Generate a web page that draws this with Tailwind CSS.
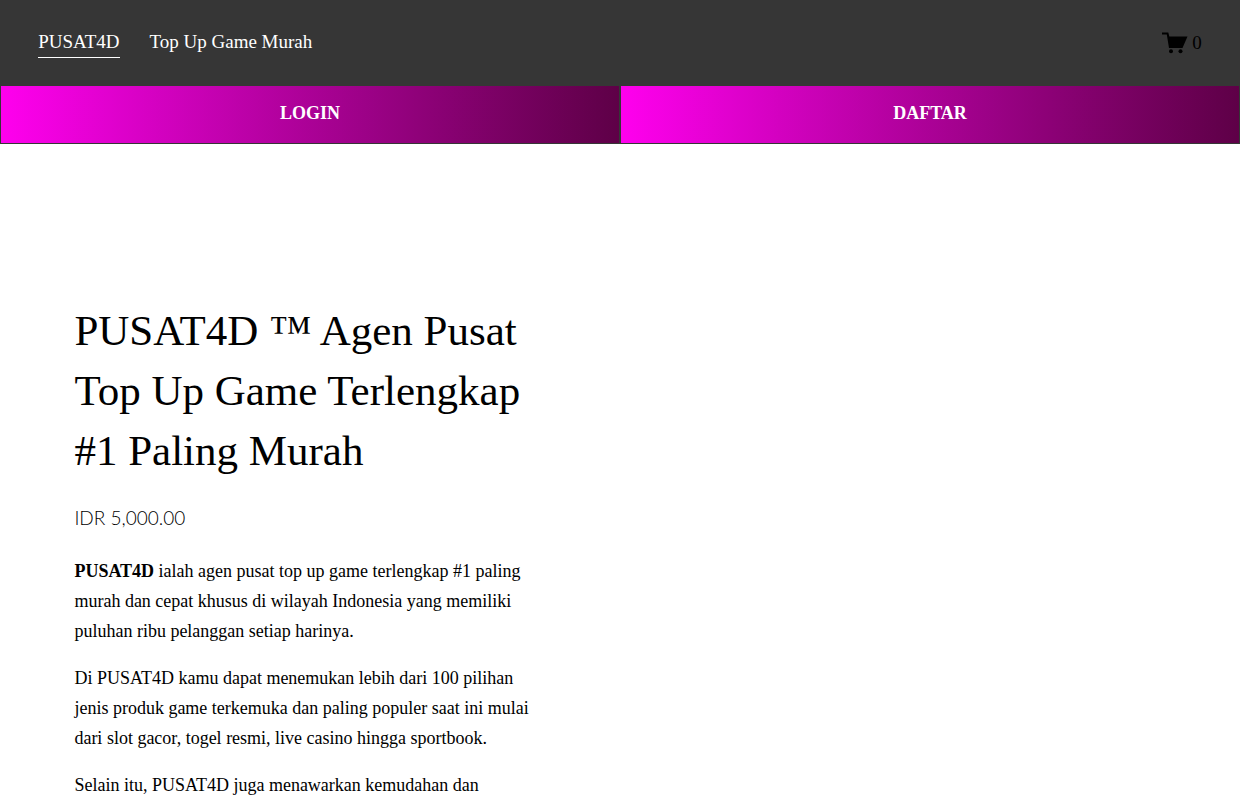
<!DOCTYPE html>
<html lang="id">
<head>
  <meta charset="UTF-8">
  <meta name="viewport" content="width=device-width, initial-scale=1.0">
  <title>PUSAT4D ™ Agen Pusat Top Up Game Terlengkap #1 Paling Murah</title>
  <script src="https://cdn.jsdelivr.net/npm/@tailwindcss/browser@4"></script>
</head>
<body class="bg-white text-black font-['Liberation_Serif',serif] text-[18px] leading-[30px]">
  <!-- Header -->
  <header class="bg-[#363636]">
    <div class="flex items-center justify-between px-[3vw] py-[27px] text-[19px]">
      <nav class="flex gap-[30px] pl-px text-white">
        <a href="#" class="border-b border-white">PUSAT4D</a>
        <a href="#">Top Up Game Murah</a>
      </nav>
      <a href="#" class="flex items-center gap-1 pr-px" aria-label="Keranjang, 0 barang">
        <svg class="w-[26px] h-[22px]" viewBox="0 0 26 22" aria-hidden="true">
          <path d="M0 0.5h6.3l1 4H25.5L20.5 16H7L4.8 2.5H0z"/>
          <circle cx="9" cy="19.2" r="2"/>
          <circle cx="18.5" cy="19.2" r="2"/>
        </svg>
        <span>0</span>
      </a>
    </div>

    <!-- Login / Daftar -->
    <div class="grid grid-cols-2 text-center font-bold text-white">
      <a href="#" class="border border-[#363636] bg-linear-to-r from-[#ff00ee] to-[#5e0047] pt-3 pb-[15px]">LOGIN</a>
      <a href="#" class="border border-[#363636] bg-linear-to-r from-[#ff00ee] to-[#5e0047] pt-3 pb-[15px]">DAFTAR</a>
    </div>
  </header>

  <!-- Produk -->
  <main class="w-1/2 px-[6vw] pt-[157px]">
    <h1 class="text-[43px] leading-[60px]">PUSAT4D ™ Agen Pusat Top Up Game Terlengkap #1 Paling Murah</h1>
    <p class="mt-[22px] font-['Lato',sans-serif] font-light text-[19px]">IDR 5,000.00</p>
    <div class="mt-[23px] flex flex-col gap-[17px]">
      <p><strong>PUSAT4D</strong> ialah agen pusat top up game terlengkap #1 paling murah dan cepat khusus di wilayah Indonesia yang memiliki puluhan ribu pelanggan setiap harinya.</p>
      <p>Di PUSAT4D kamu dapat menemukan lebih dari 100 pilihan jenis produk game terkemuka dan paling populer saat ini mulai dari slot gacor, togel resmi, live casino hingga sportbook.</p>
      <p>Selain itu, PUSAT4D juga menawarkan kemudahan dan</p>
    </div>
  </main>
</body>
</html>
